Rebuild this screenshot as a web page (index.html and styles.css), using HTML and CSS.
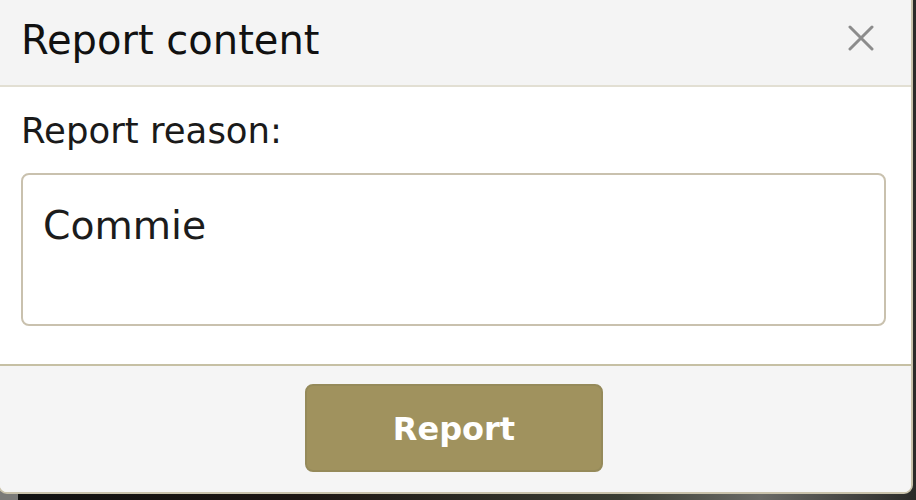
FILE: index.html
```html
<!DOCTYPE html>
<html lang="en">
<head>
  <meta charset="UTF-8" />
  <meta name="viewport" content="width=device-width, initial-scale=1.0">
  <title>Report content</title>
  <link rel="stylesheet" href="styles.css">
</head>
<body>
  <div class="modal">
    <div class="modal-header">
      <h2>Report content</h2>
      <button type="button" class="close" aria-label="Close">
        <svg width="26" height="26" viewBox="0 0 26 26">
          <path d="M2 2 L24 24 M24 2 L2 24" stroke="#8c8c8c" stroke-width="3" stroke-linecap="round" fill="none" />
        </svg>
      </button>
    </div>

    <div class="modal-body">
      <label for="reason">Report reason:</label>
      <textarea id="reason">Commie</textarea>
    </div>

    <div class="modal-footer">
      <button type="button" class="btn-report">Report</button>
    </div>
  </div>
</body>
</html>
```

FILE: styles.css
```css
* {
  box-sizing: border-box;
  font-family: 'DejaVu Sans', Verdana, sans-serif;
}

body {
  margin: 0;
  height: 500px;
  overflow: hidden;
  background: linear-gradient(90deg, #7a7a78 0, #7a7a78 18px, #111 18px, #1c1512 300px, #3a3d33 620px, #6a6a66 760px, #2a2a28 916px);
}

.modal {
  width: 915px;
  margin: -2px 0 0 -2px;
  border: 2px solid #c9c2ab;
  border-radius: 0 0 9px 9px;
  overflow: hidden;
  background: #fff;
}

.modal-header {
  display: flex;
  justify-content: space-between;
  align-items: flex-start;
  height: 87px;
  padding: 16px 37px 0 21px;
  background: #f4f4f4;
  border-bottom: 2px solid #e2dfd3;
}

h2 {
  margin: 0;
  font-size: 40px;
  font-weight: normal;
  line-height: 48px;
  color: #111;
}

.close {
  border: none;
  background: none;
  padding: 0;
  margin-top: 9px;
  cursor: pointer;
  display: flex;
}

.modal-body {
  padding: 24px 25px 38px 21px;
  background: #fff;
}

label {
  display: block;
  font-size: 35.5px;
  line-height: 40px;
  color: #1a1a1a;
  margin-bottom: 22px;
}

textarea {
  display: block;
  width: 100%;
  height: 153px;
  padding: 27px 19px 0 20px;
  border: 2px solid #c9c1ae;
  border-radius: 8px;
  font-size: 39.3px;
  line-height: 47px;
  color: #1c1c1c;
  background: #fff;
  resize: none;
  outline: none;
}

.modal-footer {
  display: flex;
  justify-content: center;
  padding: 18px 3px 20px 0;
  background: #f5f5f5;
  border-top: 2px solid #c6c0a4;
}

.btn-report {
  width: 298px;
  height: 88px;
  padding-top: 3px;
  border: 2px solid #958a5a;
  border-radius: 8px;
  background: #a0925e;
  color: #fff;
  font-size: 32px;
  font-weight: bold;
  cursor: pointer;
}
```
